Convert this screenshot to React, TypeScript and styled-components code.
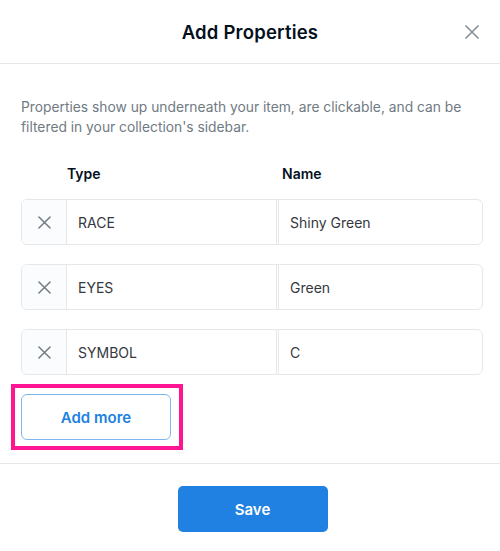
import * as React from 'react';
import styled, { createGlobalStyle } from 'styled-components';

const GlobalStyle = createGlobalStyle`
    html, body {
        margin: 0;
        padding: 0;
        background: #ffffff;
    }
    body {
        font-family: Inter, "Open Sans", "Liberation Sans", sans-serif;
        color: #04111d;
    }
`;

const Modal = styled.div`
    width: 500px;
    height: 551px;
    display: flex;
    flex-direction: column;
    background: #ffffff;
`;

const Header = styled.header`
    position: relative;
    height: 63px;
    display: flex;
    align-items: center;
    justify-content: center;
    border-bottom: 1px solid #e5e8eb;
`;

const Title = styled.h2`
    margin: 0;
    font-size: 18.5px;
    font-weight: 600;
    color: #04111d;
    letter-spacing: 0.2px;
`;

const CloseButton = styled.button`
    position: absolute;
    right: 18px;
    top: 22px;
    width: 20px;
    height: 20px;
    padding: 0;
    border: none;
    background: transparent;
    display: flex;
    align-items: center;
    justify-content: center;
    color: #8a939b;
    cursor: pointer;
`;

const Body = styled.section`
    padding: 33px 17px 13px 21px;
    border-bottom: 1px solid #e5e8eb;
`;

const BodyInner = styled.div`
    display: flex;
    flex-direction: column;
`;

const Description = styled.p`
    margin: 0 0 27px;
    font-size: 13.8px;
    line-height: 20px;
    color: #707a83;
`;

const ColumnHeads = styled.div`
    display: grid;
    grid-template-columns: 45px 211px 1fr;
    margin-bottom: 15px;
`;

const ColumnHead = styled.span<{ $indent?: number }>`
    font-size: 14px;
    font-weight: 600;
    line-height: 20px;
    color: #04111d;
    padding-left: ${p => p.$indent ?? 0}px;
`;

const Rows = styled.div`
    display: flex;
    flex-direction: column;
    gap: 19px;
`;

const Row = styled.div`
    display: grid;
    grid-template-columns: 45px 210px 1fr;
    height: 46px;
    box-sizing: border-box;
    border: 1px solid #e5e8eb;
    border-radius: 6px;
    overflow: hidden;
`;

const RemoveCell = styled.button`
    border: none;
    border-right: 1px solid #e5e8eb;
    background: #fbfcfd;
    display: flex;
    align-items: center;
    justify-content: center;
    color: #707a83;
    padding: 0;
    cursor: pointer;
`;

const Cell = styled.div<{ $divider?: boolean }>`
    display: flex;
    align-items: center;
    padding-left: 11px;
    font-size: 14px;
    color: #353840;
    border-right: ${p => (p.$divider ? '1px solid #e5e8eb' : 'none')};
    ${p => (p.$divider ? '' : 'border-left: 1px solid #e5e8eb; margin-left: 1px;')}
`;

const Highlight = styled.div`
    align-self: flex-start;
    margin: 9px 0 0 -10px;
    padding: 6px 8px 6px 6px;
    border: 4px solid #ff1493;
`;

const AddButton = styled.button`
    display: block;
    width: 150px;
    height: 46px;
    box-sizing: border-box;
    border: 1px solid #7fb6ee;
    border-radius: 6px;
    background: #ffffff;
    color: #2081e2;
    font-family: inherit;
    font-size: 15px;
    font-weight: 600;
    cursor: pointer;
`;

const Footer = styled.footer`
    display: flex;
    justify-content: center;
    padding: 22px 0 0 5px;
`;

const SaveButton = styled.button`
    width: 150px;
    height: 46px;
    border: none;
    border-radius: 5px;
    background: #2081e2;
    color: #ffffff;
    font-family: inherit;
    font-size: 15px;
    font-weight: 600;
    cursor: pointer;
`;

const Cross = ({ size, width }: { size: number; width: number }) => (
    <svg width={size} height={size} viewBox="0 0 14 14" fill="none" stroke="currentColor" strokeWidth={width} strokeLinecap="round">
        <path d="M1 1L13 13M13 1L1 13" />
    </svg>
);

const properties = [
    { type: 'RACE', name: 'Shiny Green' },
    { type: 'EYES', name: 'Green' },
    { type: 'SYMBOL', name: 'C' },
];

export default function App() {
    return (
        <>
            <GlobalStyle />
            <Modal>
                <Header>
                    <Title>Add Properties</Title>
                    <CloseButton aria-label="Close">
                        <Cross size={14} width={1.7} />
                    </CloseButton>
                </Header>
                <Body>
                    <BodyInner>
                        <Description>
                            Properties show up underneath your item, are clickable, and can be filtered in your collection's sidebar.
                        </Description>
                        <ColumnHeads>
                            <span />
                            <ColumnHead $indent={1}>Type</ColumnHead>
                            <ColumnHead $indent={5}>Name</ColumnHead>
                        </ColumnHeads>
                        <Rows>
                            {properties.map(p => (
                                <Row key={p.type}>
                                    <RemoveCell aria-label="Remove">
                                        <Cross size={13} width={1.6} />
                                    </RemoveCell>
                                    <Cell $divider>{p.type}</Cell>
                                    <Cell>{p.name}</Cell>
                                </Row>
                            ))}
                        </Rows>
                        <Highlight>
                            <AddButton>Add more</AddButton>
                        </Highlight>
                    </BodyInner>
                </Body>
                <Footer>
                    <SaveButton>Save</SaveButton>
                </Footer>
            </Modal>
        </>
    );
}
